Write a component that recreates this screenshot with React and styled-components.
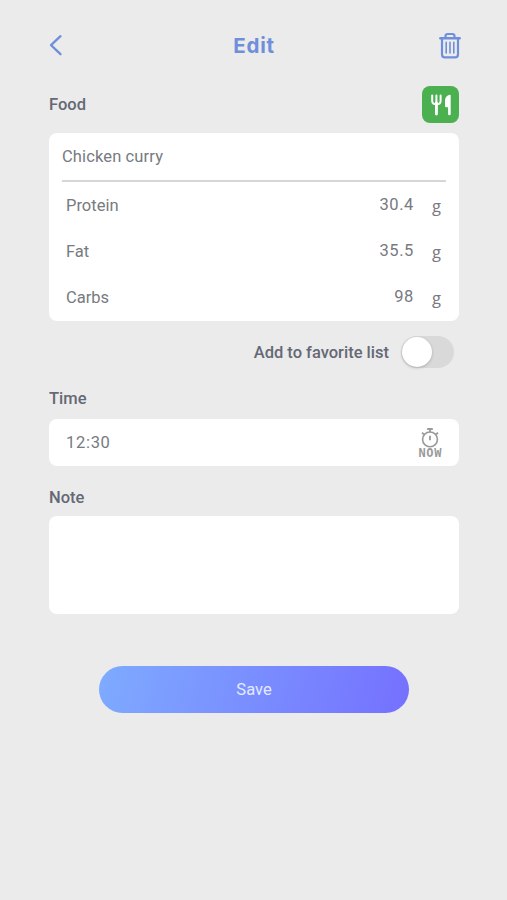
import React, { useState } from "react";
import styled, { createGlobalStyle } from "styled-components";

const GlobalStyle = createGlobalStyle`
  * {
    box-sizing: border-box;
  }

  body {
    margin: 0;
    background: #ebebeb;
    font-family: Roboto, "Liberation Sans", sans-serif;
    font-size: 16.5px;
    color: #777a80;
  }

  button, input, textarea {
    font: inherit;
    color: inherit;
    border: none;
    outline: none;
    padding: 0;
    margin: 0;
    background: none;
  }
`;

const Container = styled.div`
  min-height: 100vh;
  padding: 27px 48px 0 49px;
  display: flex;
  flex-direction: column;
`;

const Header = styled.header`
  height: 36px;
  display: grid;
  grid-template-columns: 40px 1fr 40px;
  align-items: start;
`;

const IconButton = styled.button`
  height: 36px;
  display: flex;
  align-items: center;
  justify-content: ${(props) => (props.$end ? "flex-end" : "flex-start")};
  margin-right: ${(props) => (props.$end ? "-3px" : "0")};
  color: #6f8fdb;
`;

const Title = styled.h1`
  margin: 0;
  padding-top: 1px;
  text-align: center;
  font-family: Inter, Roboto, sans-serif;
  font-size: 20.5px;
  line-height: 36px;
  font-weight: 650;
  letter-spacing: 0.8px;
  color: #6f8fdb;
`;

const SectionHeader = styled.div`
  height: ${(props) => props.$height}px;
  margin-top: ${(props) => props.$top}px;
  display: flex;
  align-items: center;
  justify-content: space-between;
`;

const Label = styled.span`
  padding-top: 1px;
  font-weight: 500;
  line-height: 20px;
  letter-spacing: ${(props) => props.$spacing || 0}px;
  color: #656875;
`;

const FoodBadge = styled.div`
  width: 37px;
  height: 37px;
  border-radius: 8px;
  background: #4bb050;
  display: flex;
  align-items: center;
  justify-content: center;
`;

const Card = styled.div`
  background: #fff;
  border-radius: 8px;
`;

const FoodCard = styled(Card)`
  height: 188px;
  margin-top: 10px;
  padding: 0 13px;
`;

const FoodName = styled.input`
  display: block;
  width: 100%;
  height: 49px;
  border-bottom: 2px solid #d6d6d6;
  letter-spacing: 0.12px;
`;

const NutrientRow = styled.label`
  height: 46.4px;
  padding: 0 5px 0 4px;
  display: flex;
  align-items: center;
`;

const NutrientName = styled.span`
  flex: 1;
`;

const Amount = styled.input`
  width: 80px;
  height: 24px;
  margin-bottom: 2px;
  text-align: right;
  letter-spacing: 0.6px;
`;

const Unit = styled.span`
  width: 27px;
  text-align: right;
  font-family: "Open Sans", sans-serif;
`;

const FavoriteRow = styled.div`
  height: 34px;
  margin-top: 14px;
  padding-right: 5px;
  display: flex;
  align-items: center;
  justify-content: flex-end;
  gap: 12px;
`;

const Toggle = styled.button`
  width: 53px;
  height: 32px;
  padding: 1px;
  border-radius: 16px;
  display: flex;
  justify-content: ${(props) => (props.$on ? "flex-end" : "flex-start")};
  background: ${(props) => (props.$on ? "#7b97ff" : "#d9d9d9")};
`;

const Knob = styled.span`
  width: 30px;
  height: 30px;
  border-radius: 50%;
  background: #fff;
  box-shadow: 0 1px 3px rgba(0, 0, 0, 0.22);
`;

const TimeCard = styled(Card)`
  height: 47px;
  margin-top: 11px;
  padding: 0 17px;
  display: flex;
  align-items: center;
  justify-content: space-between;
`;

const TimeInput = styled.input`
  width: 120px;
  height: 24px;
  letter-spacing: 0.7px;
`;

const NowButton = styled.button`
  width: 24px;
  display: flex;
  flex-direction: column;
  align-items: center;
  color: #9a9a9a;
`;

const NowText = styled.span`
  font-family: "DejaVu Sans Mono", monospace;
  font-size: 12px;
  line-height: 10px;
  font-weight: 700;
  letter-spacing: 0.6px;
  margin-right: -0.6px;
`;

const NoteInput = styled.textarea`
  display: block;
  width: 100%;
  height: 98px;
  margin-top: 9px;
  padding: 12px;
  border-radius: 8px;
  resize: none;
  background: #fff;
`;

const SaveButton = styled.button`
  width: 310px;
  height: 47px;
  margin-top: 52px;
  align-self: center;
  border-radius: 24px;
  background: linear-gradient(105deg, #7eabff 0%, #7570ff 100%);
  color: #e3eaff;
`;

const BackIcon = () => (
  <svg width="14" height="22" viewBox="0 0 14 22" fill="none">
    <path
      d="M11.5 2.2 2 11.2l9.5 9"
      stroke="currentColor"
      strokeWidth="2.3"
      strokeLinecap="round"
      strokeLinejoin="round"
    />
  </svg>
);

const TrashIcon = () => (
  <svg
    width="24"
    height="27"
    viewBox="0 0 24 27"
    fill="none"
    stroke="currentColor"
    strokeLinecap="round"
    strokeLinejoin="round"
  >
    <path d="M2.3 6.2h19.4" strokeWidth="2.4" />
    <path
      d="M4 6.2v16.3c0 1.9 1 2.8 2.8 2.8h10.4c1.8 0 2.8-.9 2.8-2.8V6.2"
      strokeWidth="2.2"
    />
    <path d="M7.5 5.8V4.2c0-1.4.8-2.2 2.2-2.2h4.6c1.4 0 2.2.8 2.2 2.2v1.6" strokeWidth="2.2" />
    <path d="M8.2 10.4v10.5M12 10.4v10.5M15.8 10.4v10.5" strokeWidth="1.6" />
  </svg>
);

const CutleryIcon = () => (
  <svg width="20" height="22" viewBox="0 0 20 22" fill="none">
    <path
      d="M1.2 1.5V7q0 3.2 4.2 3.2T9.600 7V1.500M5.400 1.500V20"
      stroke="#fff"
      strokeWidth="2"
      strokeLinecap="round"
    />
    <path d="M5.400 9v11" stroke="#fff" strokeWidth="2.800" strokeLinecap="round" />
    <path
      d="M19.700 1.500V20q0 1.300-1.300 1.300T17.100 20v-6.700h-1.700q-1.400 0-1.400-1.400V6.500Q14.200 1.600 18.800.7q.9-.1.900.8Z"
      fill="#fff"
    />
  </svg>
);

const StopwatchIcon = () => (
  <svg width="20" height="20" viewBox="0 0 20 20" fill="none" stroke="currentColor">
    <circle cx="10" cy="11.4" r="7.400" strokeWidth="1.600" />
    <path d="M7.2 1h5.600M10 1v3M2 4.700l2 1.700M18 4.700l-2 1.700" strokeWidth="1.800" />
    <path d="M10 7.800v4.500" strokeWidth="1.800" />
  </svg>
);

const nutrients = [
  { name: "Protein", value: "30.4" },
  { name: "Fat", value: "35.5" },
  { name: "Carbs", value: "98" },
];

const App = () => {
  const [favorite, setFavorite] = useState(false);

  return (
    <>
      <GlobalStyle />
      <Container>
        <Header>
          <IconButton aria-label="Back">
            <BackIcon />
          </IconButton>
          <Title>Edit</Title>
          <IconButton $end aria-label="Delete">
            <TrashIcon />
          </IconButton>
        </Header>

        <SectionHeader $height={37} $top={23}>
          <Label>Food</Label>
          <FoodBadge>
            <CutleryIcon />
          </FoodBadge>
        </SectionHeader>
        <FoodCard>
          <FoodName defaultValue="Chicken curry" />
          {nutrients.map(({ name, value }) => (
            <NutrientRow key={name}>
              <NutrientName>{name}</NutrientName>
              <Amount defaultValue={value} />
              <Unit>g</Unit>
            </NutrientRow>
          ))}
        </FoodCard>

        <FavoriteRow>
          <Label>Add to favorite list</Label>
          <Toggle
            $on={favorite}
            aria-label="Favorite"
            onClick={() => setFavorite(!favorite)}
          >
            <Knob />
          </Toggle>
        </FavoriteRow>

        <SectionHeader $height={20} $top={19}>
          <Label>Time</Label>
        </SectionHeader>
        <TimeCard>
          <TimeInput defaultValue="12:30" />
          <NowButton>
            <StopwatchIcon />
            <NowText>NOW</NowText>
          </NowButton>
        </TimeCard>

        <SectionHeader $height={20} $top={21}>
          <Label>Note</Label>
        </SectionHeader>
        <NoteInput />

        <SaveButton>Save</SaveButton>
      </Container>
    </>
  );
};

export default App;
